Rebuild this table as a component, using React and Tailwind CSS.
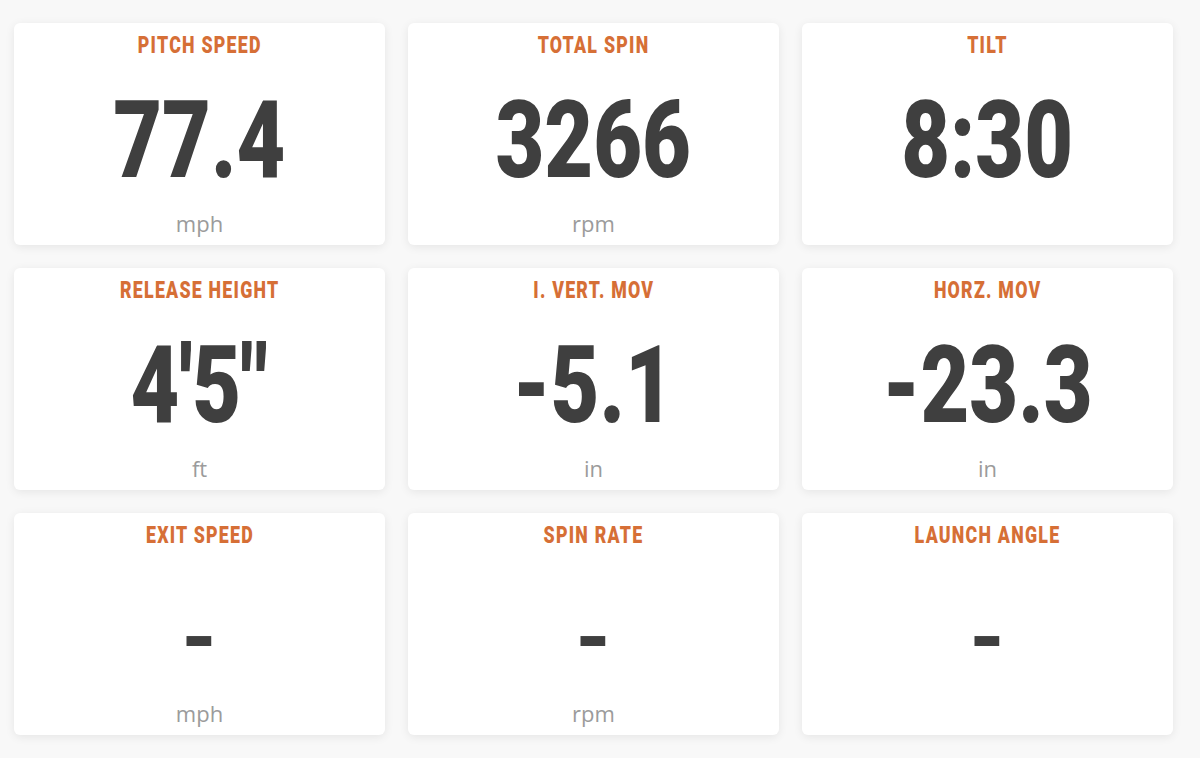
const stats = [
  { label: "PITCH SPEED", value: "77.4", unit: "mph" },
  { label: "TOTAL SPIN", value: "3266", unit: "rpm" },
  { label: "TILT", value: "8:30", unit: "" },
  { label: "RELEASE HEIGHT", value: "4'5\"", unit: "ft" },
  { label: "I. VERT. MOV", value: "-5.1", unit: "in" },
  { label: "HORZ. MOV", value: "-23.3", unit: "in" },
  { label: "EXIT SPEED", value: "-", unit: "mph" },
  { label: "SPIN RATE", value: "-", unit: "rpm" },
  { label: "LAUNCH ANGLE", value: "-", unit: "" },
];

function StatCard({ label, value, unit }) {
  const empty = value === "-";
  return (
    <div className="h-[222px] bg-white rounded-md shadow-[0_2px_10px_rgba(0,0,0,0.08)] flex flex-col items-center pt-[10px]">
      {/* Label */}
      <div className="h-[24px] leading-[24px] text-[24px] font-black text-[#d66f36] tracking-[0.07em] scale-x-[0.74] whitespace-nowrap font-['Roboto',sans-serif]">
        {label}
      </div>

      {/* Value */}
      <div className="mt-[22px] h-[122px] leading-[122px] text-[108px] font-black text-[#3f3f3f] scale-x-[0.78] whitespace-nowrap font-['Roboto',sans-serif]">
        {empty ? (
          <span className="inline-block translate-y-[8px] scale-y-[0.72]">-</span>
        ) : (
          value
        )}
      </div>

      {/* Unit */}
      <div className="mt-[9px] h-[26px] leading-[26px] text-[22px] text-[#9b9b9b] font-['Open_Sans',sans-serif]">
        {unit}
      </div>
    </div>
  );
}

export default function App() {
  return (
    <div className="w-[1200px] h-[758px] bg-[#f8f8f8] pt-[23px] pl-[14px] overflow-hidden">
      <div className="grid grid-cols-[371px_371px_371px] gap-x-[23px] gap-y-[23px]">
        {stats.map((s, index) => (
          <StatCard key={index} {...s} />
        ))}
      </div>
    </div>
  );
}
